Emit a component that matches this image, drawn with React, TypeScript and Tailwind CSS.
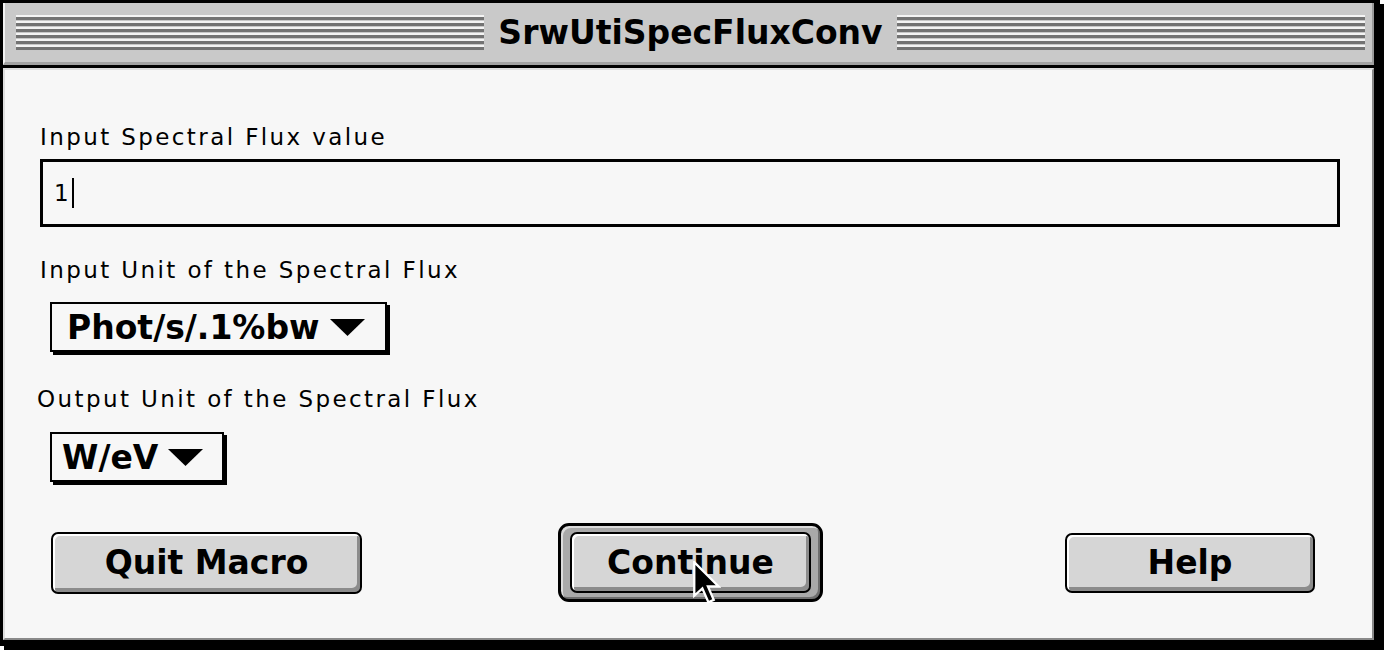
import React from "react";

const chicago = { fontFamily: '"DejaVu Sans", "Liberation Sans", sans-serif' };

const Stripes = () => (
  <div className="h-[36px] flex-1 bg-[repeating-linear-gradient(to_bottom,#f4f4f4_0px,#f4f4f4_2px,#737373_2px,#737373_5px,#c8c8c8_5px,#c8c8c8_6px)]" />
);

const Triangle = () => (
  <svg width="35" height="17" viewBox="0 0 35 17" className="shrink-0">
    <polygon points="0,0 35,0 17.5,17" fill="#000" />
  </svg>
);

const Popup = ({ label, width, pl }: { label: string; width: string; pl: string }) => (
  <div
    className={`ml-[10px] flex h-[50px] ${width} ${pl} items-center gap-[10px] border-2 border-black bg-[#f7f7f7] pr-[6px] shadow-[3px_3px_0_#000]`}
  >
    <span className="text-[33px] font-bold leading-[33px] text-black" style={chicago}>
      {label}
    </span>
    <Triangle />
  </div>
);

const Button = ({ label, className }: { label: string; className: string }) => (
  <div
    className={`flex items-center justify-center rounded-[7px] border-2 border-black bg-[#d6d6d6] shadow-[inset_2px_2px_0_#ffffff,inset_-3px_-4px_0_#8c8c8c] ${className}`}
  >
    <span className="text-[33px] font-bold leading-[33px] text-black" style={chicago}>
      {label}
    </span>
  </div>
);

const Label = ({ text, className = "" }: { text: string; className?: string }) => (
  <div className={`text-[23px] leading-[28px] tracking-[2.4px] text-black ${className}`} style={chicago}>
    {text}
  </div>
);

export default function App() {
  return (
    <div className="relative h-[650px] w-[1384px] overflow-hidden bg-white">
      <div className="flex h-[646px] w-[1380px] flex-col border-b-[6px] border-l-[3px] border-r-[6px] border-t-[3px] border-black shadow-[4px_4px_0_#000]">
        {/* title bar */}
        <div className="flex h-[62px] shrink-0 items-center border-b-[3px] border-l-2 border-r-2 border-b-[#a2a2a2] border-l-[#f2f2f2] border-r-[#9a9a9a] bg-[#c9c9c9] pl-[11px] pr-[7px]">
          <Stripes />
          <span className="px-[14px] text-[33px] font-bold leading-[33px] text-black" style={chicago}>
            SrwUtiSpecFluxConv
          </span>
          <Stripes />
        </div>
        <div className="h-[3px] shrink-0 bg-black" />

        {/* content */}
        <div className="flex flex-1 flex-col border-b-2 border-l-2 border-r-2 border-t-2 border-b-[#8a8a8a] border-l-[#dedede] border-r-[#8a8a8a] border-t-[#dedede] bg-[#f7f7f7] pl-[35px]">
          <Label text="Input Spectral Flux value" className="mt-[53px]" />
          <div className="mt-[8px] flex h-[68px] w-[1300px] items-center border-[3px] border-black pl-[11px]">
            <span className="text-[23px] leading-[28px] text-black" style={chicago}>
              1
            </span>
            <span className="ml-[3px] h-[30px] w-[2px] bg-black" />
          </div>

          <Label text="Input Unit of the Spectral Flux" className="mt-[29px]" />
          <div className="mt-[18px] flex">
            <Popup label="Phot/s/.1%bw" width="w-[337px]" pl="pl-[15px]" />
          </div>

          <Label text="Output Unit of the Spectral Flux" className="-ml-[3px] mt-[33px]" />
          <div className="mt-[19px] flex">
            <Popup label="W/eV" width="w-[174px]" pl="pl-[10px]" />
          </div>

          {/* buttons */}
          <div className="mt-[41px] flex items-center">
            <Button label="Quit Macro" className="ml-[11px] h-[62px] w-[311px]" />
            <div className="relative ml-[196px] flex h-[79px] w-[265px] items-center justify-center rounded-[11px] border-[3px] border-black bg-[#a9a9a9] px-[9px] shadow-[inset_2px_2px_0_#dcdcdc,inset_-2px_-2px_0_#6e6e6e]">
              <Button label="Continue" className="h-[61px] w-full" />
              <svg
                width="28"
                height="44"
                viewBox="0 0 12 19"
                className="absolute left-[132px] top-[35px]"
              >
                <path
                  d="M0.5 0.5 L0.5 15 L4 11.8 L6.6 17.8 L8.9 16.8 L6.4 11 L11 11 Z"
                  fill="#000"
                  stroke="#fff"
                  strokeWidth="1"
                  strokeLinejoin="miter"
                />
              </svg>
            </div>
            <Button label="Help" className="ml-[242px] h-[60px] w-[250px]" />
          </div>
        </div>
      </div>
    </div>
  );
}
